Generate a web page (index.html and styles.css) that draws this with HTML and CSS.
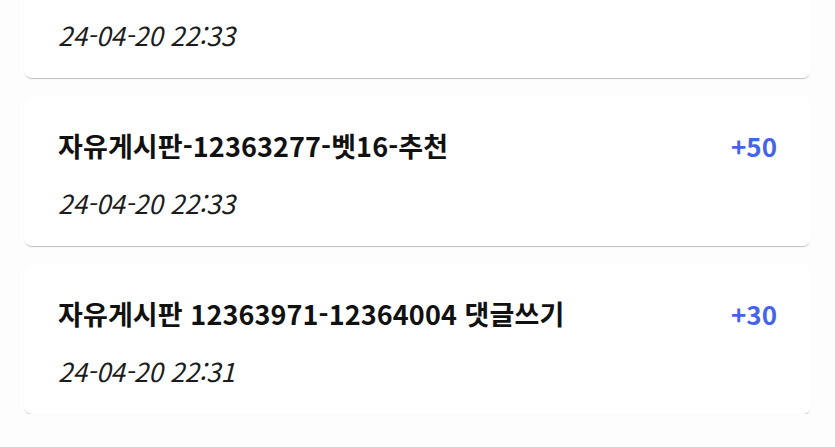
FILE: index.html
```html
<!DOCTYPE html>
<html lang="ko">
<head>
    <meta charset="UTF-8">
    <meta name="viewport" content="width=device-width, initial-scale=1.0">
    <title>포인트 내역</title>
    <link rel="stylesheet" href="styles.css">
</head>
<body>

    <!-- 포인트 내역 리스트 (스크롤된 상태) -->
    <div class="point-list">
        <div class="point-item">
            <div class="item-row">
                <div class="item-title">자유게시판-12363270-벳16-추천</div>
                <div class="item-point">+50</div>
            </div>
            <div class="item-date">24-04-20 22:33</div>
        </div>

        <div class="point-item">
            <div class="item-row">
                <div class="item-title">자유게시판-12363277-벳16-추천</div>
                <div class="item-point">+50</div>
            </div>
            <div class="item-date">24-04-20 22:33</div>
        </div>

        <div class="point-item">
            <div class="item-row">
                <div class="item-title">자유게시판 12363971-12364004 댓글쓰기</div>
                <div class="item-point">+30</div>
            </div>
            <div class="item-date">24-04-20 22:31</div>
        </div>
    </div>

</body>
</html>
```

FILE: styles.css
```css
body {
    margin: 0;
    background-color: #fdfdfd;
    font-family: "Noto Sans CJK KR", "Noto Sans", sans-serif;
    color: #111;
    overflow: hidden;
}

.point-list {
    display: flex;
    flex-direction: column;
    gap: 18px;
    padding: 0 24px;
    margin-top: -72px; /* 리스트가 스크롤된 위치 */
}

.point-item {
    background-color: #fff;
    border-radius: 8px;
    box-shadow: 0 2px 1px -1px rgba(0, 0, 0, 0.25), 0 0 2px rgba(0, 0, 0, 0.04);
    padding: 32px 34px 25px 34px;
}

.item-row {
    display: flex;
    justify-content: space-between;
    align-items: baseline;
}

.item-title {
    font-size: 27px;
    line-height: 36px;
    font-weight: bold;
    letter-spacing: 0.1px;
}

.item-point {
    font-size: 26px;
    line-height: 36px;
    font-weight: bold;
    color: #4565e8;
}

.item-date {
    margin-top: 21px;
    font-size: 26px;
    line-height: 36px;
    font-style: italic;
    color: #1c1c1c;
}
```
